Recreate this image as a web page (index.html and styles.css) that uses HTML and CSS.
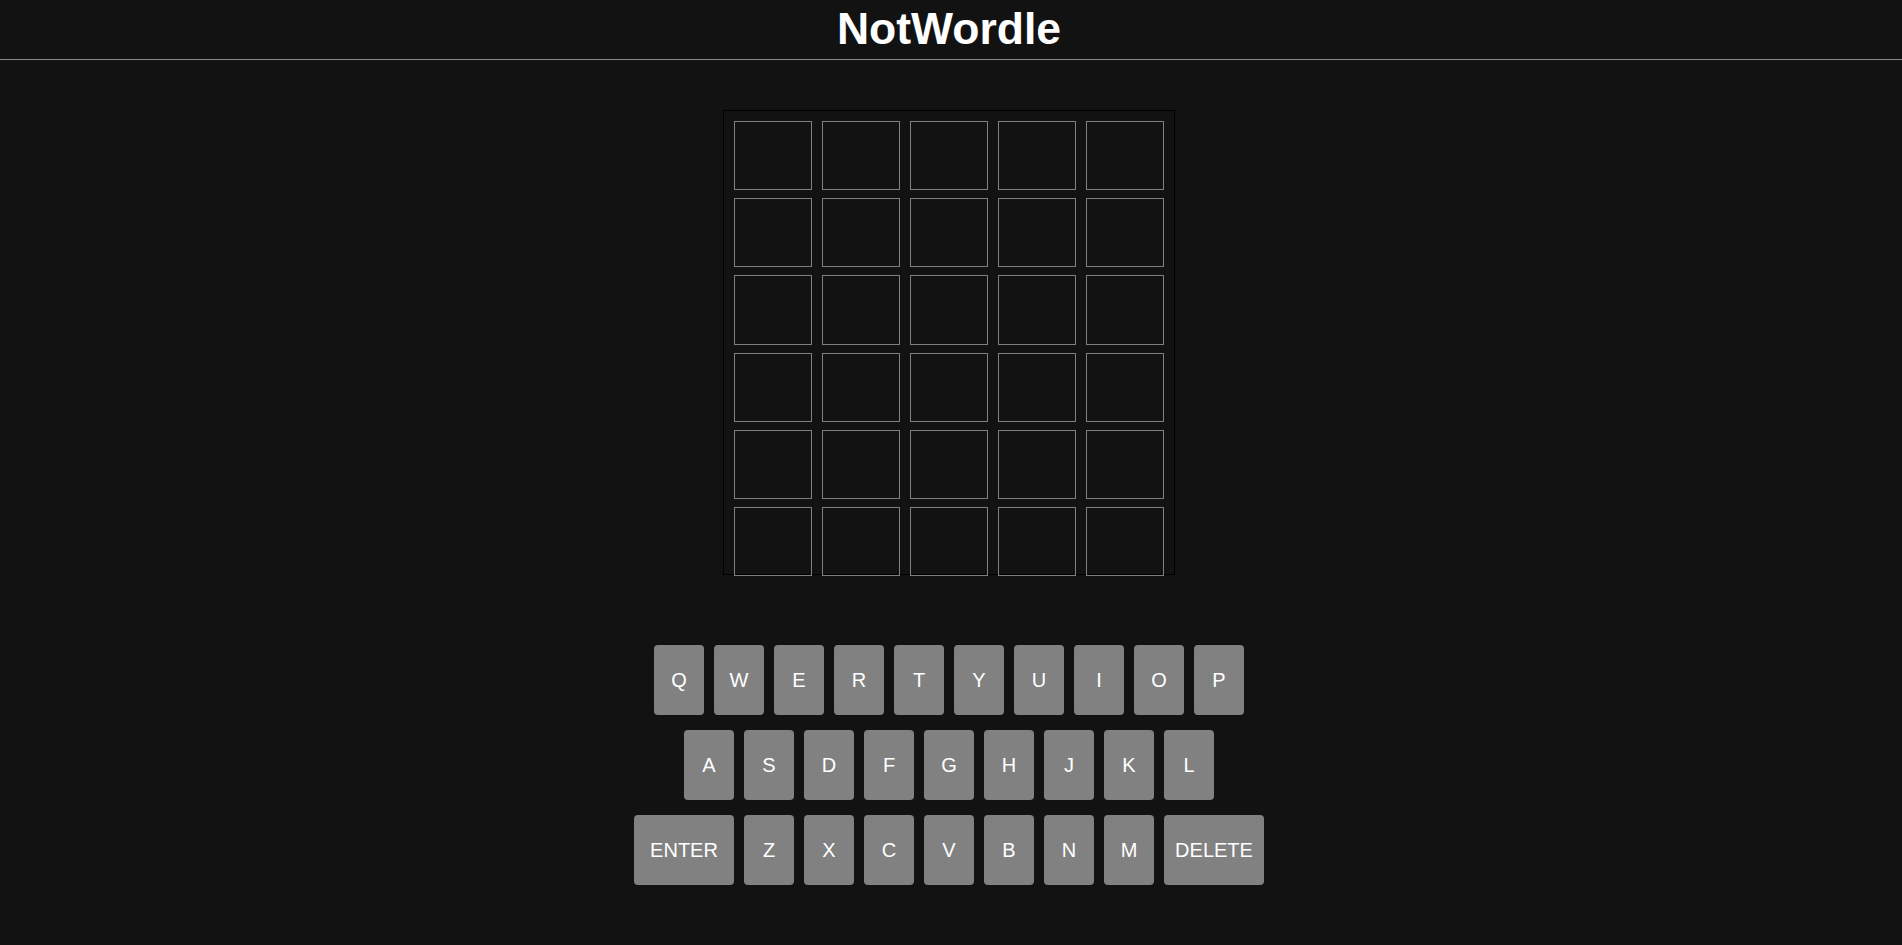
FILE: index.html
```html
<!DOCTYPE html>
<html lang="en">
<head>
<meta charset="utf-8">
<title>NotWordle</title>
<link rel="stylesheet" href="styles.css">
</head>
<body>
<header class="header">
  <h1 class="title">NotWordle</h1>
</header>
<main class="main">
  <div class="board">
    <div class="tile"></div><div class="tile"></div><div class="tile"></div><div class="tile"></div><div class="tile"></div>
    <div class="tile"></div><div class="tile"></div><div class="tile"></div><div class="tile"></div><div class="tile"></div>
    <div class="tile"></div><div class="tile"></div><div class="tile"></div><div class="tile"></div><div class="tile"></div>
    <div class="tile"></div><div class="tile"></div><div class="tile"></div><div class="tile"></div><div class="tile"></div>
    <div class="tile"></div><div class="tile"></div><div class="tile"></div><div class="tile"></div><div class="tile"></div>
    <div class="tile"></div><div class="tile"></div><div class="tile"></div><div class="tile"></div><div class="tile"></div>
  </div>
  <div class="keyboard">
    <div class="key-row">
      <button class="key">Q</button><button class="key">W</button><button class="key">E</button><button class="key">R</button><button class="key">T</button><button class="key">Y</button><button class="key">U</button><button class="key">I</button><button class="key">O</button><button class="key">P</button>
    </div>
    <div class="key-row">
      <button class="key">A</button><button class="key">S</button><button class="key">D</button><button class="key">F</button><button class="key">G</button><button class="key">H</button><button class="key">J</button><button class="key">K</button><button class="key">L</button>
    </div>
    <div class="key-row">
      <button class="key key-wide">ENTER</button><button class="key">Z</button><button class="key">X</button><button class="key">C</button><button class="key">V</button><button class="key">B</button><button class="key">N</button><button class="key">M</button><button class="key key-wide">DELETE</button>
    </div>
  </div>
</main>
</body>
</html>
```
FILE: styles.css
```css
html, body {
  margin: 0;
  padding: 0;
  background: #121212;
  color: #ffffff;
  font-family: "Liberation Sans", Arial, sans-serif;
}

.header {
  padding: 4px 4px 6px 0;
  border-bottom: 1px solid #8a8a8a;
  text-align: center;
}

.title {
  margin: 0;
  font-size: 44.5px;
  line-height: 49px;
  font-weight: bold;
}

.main {
  padding-right: 4px;
  display: flex;
  flex-direction: column;
  align-items: center;
}

.board {
  margin-top: 50px;
  box-sizing: border-box;
  width: 452px;
  height: 465px;
  border: 1px solid #000000;
  padding: 10px 10px 0 10px;
  display: grid;
  grid-template-columns: repeat(5, 78px);
  grid-template-rows: repeat(6, 69.2px);
  column-gap: 10px;
  row-gap: 8px;
}

.tile {
  box-sizing: border-box;
  border: 1px solid #808080;
}

.keyboard {
  margin-top: 70px;
  display: flex;
  flex-direction: column;
  align-items: center;
  gap: 15px;
}

.key-row {
  display: flex;
  gap: 10px;
}

.key {
  width: 50px;
  height: 70px;
  padding: 0;
  border: none;
  border-radius: 4px;
  background: #818181;
  color: #ffffff;
  font-family: "Liberation Sans", Arial, sans-serif;
  font-size: 20px;
  cursor: pointer;
}

.key-wide {
  width: 100px;
}
```
